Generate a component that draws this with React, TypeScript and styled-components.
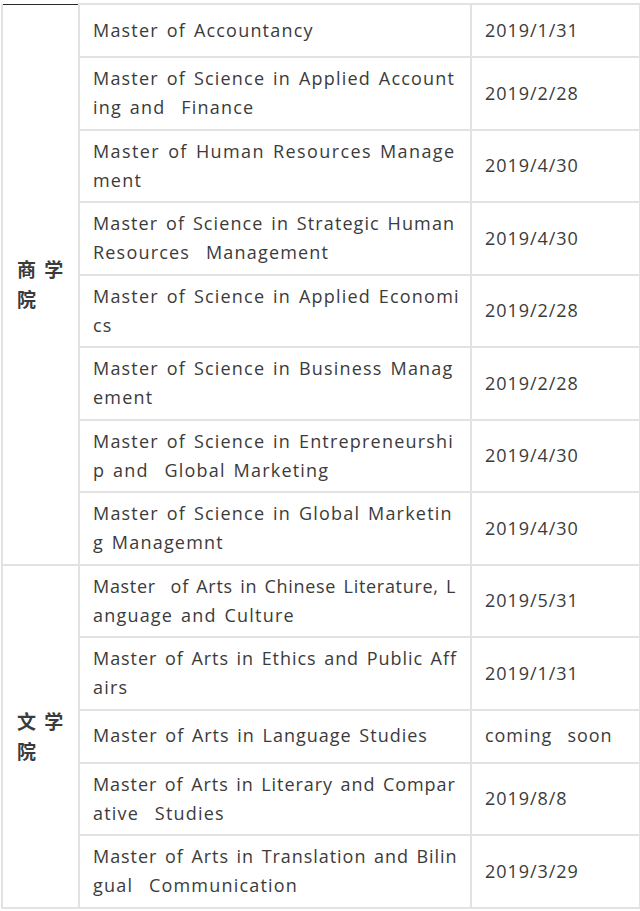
import React from "react";
import styled, { createGlobalStyle } from "styled-components";

const Global = createGlobalStyle`
  html, body { margin: 0; padding: 0; background: #ffffff; }
  body { font-family: "Open Sans", "Noto Sans CJK SC", sans-serif; }
`;

const Page = styled.div`
  padding: 3px 0 0 1px;
  width: 639px;
`;

const Table = styled.table`
  border-collapse: collapse;
  width: 638px;
  table-layout: fixed;
  color: #3b3b3b;
  font-family: "Open Sans", "Noto Sans CJK SC", sans-serif;
  font-size: 18px;
`;

const Col = styled.col<{ $w: number }>`
  width: ${(p) => p.$w}px;
`;

const Cell = styled.td`
  border: 2px solid #e2e2e2;
  padding: 6px 13px;
  line-height: 29.25px;
  height: 39px;
  vertical-align: middle;
  white-space: pre;
  letter-spacing: 1.2px;
  word-spacing: 2px;
`;

const SchoolCell = styled(Cell)<{ $topRule?: boolean }>`
  font-family: "Noto Sans CJK SC", sans-serif;
  font-weight: 700;
  font-size: 19px;
  letter-spacing: 2px;
  word-spacing: 0;
  line-height: 30px;
  padding: 0 0 0 14px;
  ${(p) => (p.$topRule ? "border-top: 1px solid #2a2a2a;" : "")}
`;

const NameCell = styled(Cell)``;

const DateCell = styled(Cell)`
  letter-spacing: 0.95px;
`;

const Line = styled.span<{ $ls?: number }>`
  display: block;
  ${(p) => (p.$ls !== undefined ? `letter-spacing: ${p.$ls}px;` : "")}
`;

type Row = { lines: string[]; date: string; ls?: number };

const business: Row[] = [
  { lines: ["Master of Accountancy"], date: "2019/1/31" },
  { lines: ["Master of Science in Applied Account", "ing and  Finance"], date: "2019/2/28" },
  { lines: ["Master of Human Resources Manage", "ment"], date: "2019/4/30", ls: 1.4 },
  { lines: ["Master of Science in Strategic Human", "Resources  Management"], date: "2019/4/30", ls: 1.1 },
  { lines: ["Master of Science in Applied Economi", "cs"], date: "2019/2/28" },
  { lines: ["Master of Science in Business Manag", "ement"], date: "2019/2/28" },
  { lines: ["Master of Science in Entrepreneurshi", "p and  Global Marketing"], date: "2019/4/30" },
  { lines: ["Master of Science in Global Marketin", "g Managemnt"], date: "2019/4/30" },
];

const arts: Row[] = [
  { lines: ["Master  of Arts in Chinese Literature, L", "anguage and Culture"], date: "2019/5/31", ls: 0.7 },
  { lines: ["Master of Arts in Ethics and Public Aff", "airs"], date: "2019/1/31", ls: 0.95 },
  { lines: ["Master of Arts in Language Studies"], date: "coming  soon", ls: 1.0 },
  { lines: ["Master of Arts in Literary and Compar", "ative  Studies"], date: "2019/8/8", ls: 0.93 },
  { lines: ["Master of Arts in Translation and Bilin", "gual  Communication"], date: "2019/3/29", ls: 0.95 },
];

const schools = [
  { name: ["商 学", "院"], rows: business, topRule: true },
  { name: ["文 学", "院"], rows: arts, topRule: false },
];

export default function App() {
  return (
    <>
      <Global />
      <Page>
        <Table>
          <colgroup>
            <Col $w={77} />
            <Col $w={392} />
            <Col $w={169} />
          </colgroup>
          <tbody>
            {schools.map((s) =>
              s.rows.map((r, i) => (
                <tr key={s.name.join("") + i}>
                  {i === 0 && (
                    <SchoolCell rowSpan={s.rows.length} $topRule={s.topRule}>
                      {s.name.map((n, k) => (
                        <Line key={k}>{n}</Line>
                      ))}
                    </SchoolCell>
                  )}
                  <NameCell>
                    {r.lines.map((l, k) => (
                      <Line key={k} $ls={k === 0 ? r.ls : undefined}>
                        {l}
                      </Line>
                    ))}
                  </NameCell>
                  <DateCell>{r.date}</DateCell>
                </tr>
              ))
            )}
          </tbody>
        </Table>
      </Page>
    </>
  );
}
